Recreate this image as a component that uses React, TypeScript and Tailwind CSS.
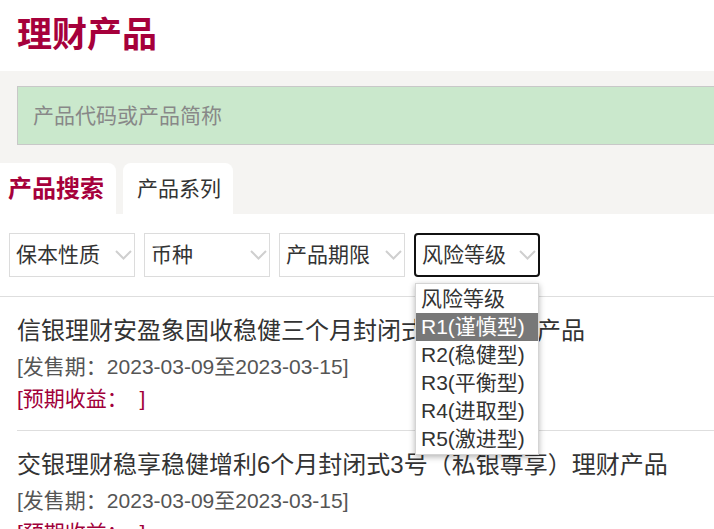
import React from "react";

const FONT = "font-['Liberation_Sans','Noto_Sans_CJK_SC',sans-serif]";

const Chevron = () => (
  <svg width="17" height="10" viewBox="0 0 17 10" className="shrink-0">
    <polyline points="1,1 8.5,8.5 16,1" fill="none" stroke="#cfcfcf" strokeWidth="2" />
  </svg>
);

interface FilterProps {
  label: string;
  focused?: boolean;
}

const Filter: React.FC<FilterProps> = ({ label, focused = false }) => (
  <div
    className={`flex h-[44px] w-[126px] items-center justify-between pl-[6px] pr-[2px] ${
      focused ? "rounded-[4px] border-2 border-[#111]" : "border border-[#dcdcdc]"
    }`}
  >
    <span className="text-[21px] text-[#333]">{label}</span>
    <Chevron />
  </div>
);

interface ProductProps {
  name: string;
  period: string;
}

const Product: React.FC<ProductProps> = ({ name, period }) => (
  <div className="ml-[17px] border-b border-[#dedede] pt-[17px] pb-[15px]">
    <p className="whitespace-nowrap text-[24px] leading-[34px] text-[#333]">{name}</p>
    <p className="mt-[3px] text-[21px] leading-[32px] text-[#555]">[发售期：{period}]</p>
    <p className="text-[21px] leading-[32px] text-[#a1003a]">[预期收益：&nbsp;&nbsp;]</p>
  </div>
);

const risks = ["风险等级", "R1(谨慎型)", "R2(稳健型)", "R3(平衡型)", "R4(进取型)", "R5(激进型)"];

export default function App() {
  return (
    <div className={`relative h-[529px] w-[714px] overflow-hidden bg-white ${FONT}`}>
      {/* header */}
      <div className="flex h-[71px] items-center pb-[3px] pl-[17px]">
        <h1 className="text-[35px] font-bold leading-none text-[#a6003b]">理财产品</h1>
      </div>

      {/* search + tabs */}
      <div className="bg-[#f5f4f2] pt-[15px]">
        <div className="ml-[17px] mr-[-20px] flex h-[59px] items-center border border-[#c8c8c8] bg-[#cae8cc] pl-[15px]">
          <span className="text-[21px] text-[#888]">产品代码或产品简称</span>
        </div>
        <div className="mt-[18px] flex gap-[7px]">
          <div className="flex h-[51px] w-[116px] items-center rounded-tr-[8px] bg-white pl-[8px]">
            <span className="text-[24px] font-bold text-[#a6003b]">产品搜索</span>
          </div>
          <div className="flex h-[51px] w-[110px] items-center rounded-t-[8px] bg-white pl-[14px]">
            <span className="text-[21px] text-[#333]">产品系列</span>
          </div>
        </div>
      </div>

      {/* filters */}
      <div className="flex gap-[9px] border-b border-[#dedede] pt-[19px] pb-[19px] pl-[9px]">
        <Filter label="保本性质" />
        <Filter label="币种" />
        <Filter label="产品期限" />
        <Filter label="风险等级" focused />
      </div>

      {/* products */}
      <Product name="信银理财安盈象固收稳健三个月封闭式103号理财产品" period="2023-03-09至2023-03-15" />
      <Product name="交银理财稳享稳健增利6个月封闭式3号（私银尊享）理财产品" period="2023-03-09至2023-03-15" />

      {/* open select menu */}
      <div className="absolute left-[415px] top-[283px] w-[124px] border border-[#d4d4d4] bg-white py-[1px] shadow-[0_2px_6px_rgba(0,0,0,0.3)]">
        {risks.map((r, i) => (
          <div
            key={r}
            className={`h-[28px] pl-[5px] text-[21px] leading-[28px] ${
              i === 1 ? "bg-[#787878] text-white" : "text-[#333]"
            }`}
          >
            {r}
          </div>
        ))}
      </div>
    </div>
  );
}
